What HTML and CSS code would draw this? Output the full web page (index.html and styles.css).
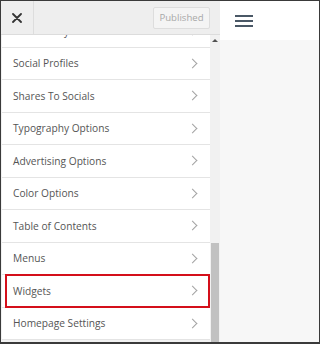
FILE: index.html
```html
<!DOCTYPE html>
<html lang="en">
<head>
<meta charset="utf-8">
<title>Customizer</title>
<link rel="stylesheet" href="styles.css">
</head>
<body>
<div class="frame">
  <aside class="panel">
    <header class="header">
      <button class="close" aria-label="Close">
        <svg width="10" height="10" viewBox="0 0 10 10"><path d="M1 1L9 9M9 1L1 9" stroke="#333" stroke-width="1.8" stroke-linecap="round"/></svg>
      </button>
      <button class="publish">Published</button>
    </header>
    <div class="body">
      <div class="viewport">
        <ul class="list">
          <li class="item"><span>Site Identity</span><i class="chev"></i></li>
          <li class="item"><span>Social Profiles</span><i class="chev"></i></li>
          <li class="item"><span>Shares To Socials</span><i class="chev"></i></li>
          <li class="item"><span>Typography Options</span><i class="chev"></i></li>
          <li class="item"><span>Advertising Options</span><i class="chev"></i></li>
          <li class="item"><span>Color Options</span><i class="chev"></i></li>
          <li class="item"><span>Table of Contents</span><i class="chev"></i></li>
          <li class="item"><span>Menus</span><i class="chev"></i></li>
          <li class="item highlight"><span>Widgets</span><i class="chev"></i></li>
          <li class="item"><span>Homepage Settings</span><i class="chev"></i></li>
        </ul>
      </div>
      <div class="scrollbar">
        <div class="arrow"></div>
        <div class="thumb"></div>
      </div>
    </div>
  </aside>
  <main class="preview">
    <div class="topbar">
      <div class="hamburger"><span></span><span></span><span></span></div>
    </div>
    <div class="canvas"></div>
  </main>
</div>
</body>
</html>
```
FILE: styles.css
```css
* { box-sizing: border-box; }
html, body { margin: 0; padding: 0; background: #fff; }
body { font-family: "Open Sans", "Noto Sans", sans-serif; }

.frame {
  width: 320px;
  height: 344px;
  border: 1px solid #3a3a3a;
  border-bottom-width: 2px;
  display: flex;
  overflow: hidden;
}

.panel {
  width: 219px;
  display: flex;
  flex-direction: column;
  background: #eeeeee;
}

.header {
  height: 34px;
  flex: none;
  display: flex;
  align-items: center;
  background: #eeeeee;
  border-bottom: 1px solid #dcdcdc;
}
.close {
  width: 33px;
  height: 100%;
  border: 0;
  border-right: 1px solid #dddddd;
  background: transparent;
  padding: 0;
  display: flex;
  align-items: center;
  justify-content: center;
}
.publish {
  margin-left: auto;
  margin-right: 10px;
  height: 22px;
  width: 57px;
  padding: 0;
  border: 1px solid #dddddd;
  border-radius: 2px;
  background: #f4f4f4;
  color: #a8a8a8;
  font-family: "Open Sans", sans-serif;
  font-size: 9.6px;
}

.body {
  flex: 1;
  display: flex;
  min-height: 0;
}
.viewport {
  flex: 1;
  overflow: hidden;
  background: #f1f1f1;
  padding-left: 1px;
}
.list {
  list-style: none;
  margin: -20px 0 0 0;
  padding: 0;
}
.item {
  position: relative;
  height: 32.5px;
  display: flex;
  align-items: center;
  justify-content: space-between;
  padding: 0 12px 0 11px;
  background: #fff;
  border-bottom: 1px solid #e4e4e4;
  color: #555;
  font-size: 10.2px;
}
.chev {
  width: 7px;
  height: 7px;
  border-right: 1.2px solid #a3a3a3;
  border-top: 1.2px solid #a3a3a3;
  transform: rotate(45deg);
  margin-right: 2px;
}
.highlight::after {
  content: "";
  position: absolute;
  left: 3px;
  right: 0;
  top: -1px;
  bottom: -1px;
  border: 2px solid #d40f1a;
}

.scrollbar {
  width: 10px;
  position: relative;
  background: #f1f1f1;
}
.arrow {
  position: absolute;
  top: 4px;
  left: 2px;
  width: 0;
  height: 0;
  border-left: 3px solid transparent;
  border-right: 3px solid transparent;
  border-bottom: 3px solid #505050;
}
.thumb {
  position: absolute;
  left: 1px;
  right: 1px;
  top: 208px;
  bottom: 0;
  background: #c1c1c1;
}

.preview {
  flex: 1;
  display: flex;
  flex-direction: column;
  background: #f7f7f7;
}
.topbar {
  height: 39px;
  background: #fff;
  display: flex;
  align-items: center;
  padding-left: 15px;
}
.hamburger {
  display: flex;
  flex-direction: column;
  gap: 3px;
  width: 18px;
}
.hamburger span {
  height: 2px;
  background: #4a5866;
}
.canvas { flex: 1; }
```
